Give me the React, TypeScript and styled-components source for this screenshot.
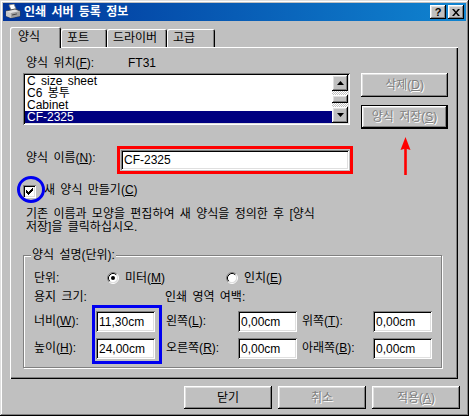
import React from 'react';
import styled, { createGlobalStyle, css } from 'styled-components';

const GlobalStyle = createGlobalStyle`
  html, body {
    margin: 0;
    padding: 0;
    background: #c0c0c0;
  }
  body {
    font-family: "Liberation Sans", "Noto Sans CJK KR", sans-serif;
    font-size: 12px;
    word-spacing: 2px;
    color: #000;
  }
  * { box-sizing: border-box; }
`;

// classic 3D edges
const raised = css`
  box-shadow: inset -1px -1px #000, inset 1px 1px #fff, inset -2px -2px #808080, inset 2px 2px #dfdfdf;
`;
const sunken = css`
  box-shadow: inset 1px 1px #808080, inset -1px -1px #fff, inset 2px 2px #000, inset -2px -2px #dfdfdf;
`;

const Window = styled.div`
  width: 469px;
  height: 416px;
  padding: 3px;
  background: #c0c0c0;
  box-shadow: inset -1px -1px #000, inset 1px 1px #dfdfdf, inset -2px -2px #808080, inset 2px 2px #fff;
  display: flex;
  flex-direction: column;
`;

const TitleBar = styled.div`
  height: 18px;
  display: flex;
  align-items: center;
  padding: 0 2px;
  background: linear-gradient(90deg, #00349a 0%, #1084d0 100%);
  color: #fff;
`;

const TitleText = styled.span`
  flex: 1;
  margin-left: 3px;
  font-weight: bold;
  line-height: 14px;
  white-space: nowrap;
`;

const CaptionButton = styled.div<{ $gap?: boolean }>`
  width: 16px;
  height: 14px;
  margin-left: ${({ $gap }) => ($gap ? 2 : 0)}px;
  background: #c0c0c0;
  ${raised}
  display: flex;
  align-items: center;
  justify-content: center;
  color: #000;
  font: bold 11px "Liberation Sans", sans-serif;
  line-height: 12px;
`;

const Body = styled.div`
  padding: 6px 0 0 7px;
`;

const TabStrip = styled.div`
  height: 20px;
  display: flex;
  align-items: flex-start;
`;

const Tab = styled.div<{ $active?: boolean; $w: number }>`
  position: relative;
  z-index: ${({ $active }) => ($active ? 1 : 0)};
  width: ${({ $w }) => $w}px;
  height: ${({ $active }) => ($active ? 21 : 18)}px;
  margin-top: ${({ $active }) => ($active ? 0 : 2)}px;
  padding: ${({ $active }) => ($active ? '3px 0 0 8px' : '2px 0 0 6px')};
  line-height: 14px;
  background: #c0c0c0;
  border-radius: 2px 2px 0 0;
  box-shadow: inset 1px 1px #fff, inset -1px 0 #000, inset -2px 0 #808080;
  white-space: nowrap;
`;

const Panel = styled.div`
  position: relative;
  width: 448px;
  height: 332px;
  padding: 9px 0 0 13px;
  box-shadow: inset 1px 1px #fff, inset -1px -1px #000, inset -2px -2px #808080;
  display: flex;
  flex-direction: column;
`;

const Row = styled.div<{ $mt: number; $h?: number }>`
  display: flex;
  align-items: flex-start;
  margin-top: ${({ $mt }) => $mt}px;
  ${({ $h }) => $h && `height: ${$h}px;`}
  line-height: 14px;
  white-space: nowrap;
`;

const Label = styled.span<{ $w?: number; $pl?: number; $mt?: number }>`
  display: inline-block;
  ${({ $w }) => $w && `width: ${$w}px;`}
  padding-left: ${({ $pl }) => $pl ?? 0}px;
  margin-top: ${({ $mt }) => $mt ?? 0}px;
  line-height: 14px;
  white-space: nowrap;
`;

const ListBox = styled.div`
  width: 327px;
  height: 52px;
  padding: 2px;
  background: #fff;
  ${sunken}
  display: flex;
`;

const ListItems = styled.div`
  flex: 1;
  display: flex;
  flex-direction: column;
`;

const ListItem = styled.div<{ $selected?: boolean }>`
  height: 12px;
  line-height: 12px;
  padding-left: 2px;
  white-space: nowrap;
  background: ${({ $selected }) => ($selected ? '#000080' : 'transparent')};
  color: ${({ $selected }) => ($selected ? '#fff' : '#000')};
`;

const ScrollBar = styled.div`
  width: 16px;
  display: flex;
  flex-direction: column;
`;

const ScrollArrow = styled.div`
  width: 16px;
  height: 16px;
  background: #c0c0c0;
  ${raised}
  display: flex;
  align-items: center;
  justify-content: center;
`;

const ScrollTrack = styled.div`
  height: 16px;
  padding-top: 4px;
  background: repeating-conic-gradient(#fff 0 25%, #c0c0c0 0 50%) 0 0 / 2px 2px;
`;

const ScrollThumb = styled.div`
  height: 8px;
  background: #c0c0c0;
  ${raised}
`;

const SideButtons = styled.div`
  margin-left: 11px;
  display: flex;
  flex-direction: column;
  gap: 8px;
`;

const Button = styled.div<{ $w: number; $h: number; $default?: boolean; $disabled?: boolean }>`
  width: ${({ $w }) => $w}px;
  height: ${({ $h }) => $h}px;
  background: #c0c0c0;
  display: flex;
  align-items: center;
  justify-content: center;
  line-height: 14px;
  white-space: nowrap;
  ${raised}
  ${({ $default }) =>
    $default &&
    css`
      box-shadow: inset 0 0 0 1px #000, inset -2px -2px #000, inset 2px 2px #fff, inset -3px -3px #808080, inset 3px 3px #dfdfdf;
    `}
  ${({ $disabled }) =>
    $disabled &&
    css`
      color: #808080;
      text-shadow: 1px 1px 0 #fff;
    `}
`;

const RedFrame = styled.div`
  width: 236px;
  height: 28px;
  border: 3px solid #ff0000;
  padding: 1px;
`;

const TextField = styled.div<{ $w?: number }>`
  width: ${({ $w }) => ($w ? `${$w}px` : '100%')};
  height: ${({ $w }) => ($w ? '21px' : '100%')};
  padding-left: 3px;
  background: #fff;
  ${sunken}
  display: flex;
  align-items: center;
  line-height: 14px;
  white-space: nowrap;
`;

const CheckBox = styled.div`
  width: 13px;
  height: 13px;
  margin-top: 2px;
  background: #fff;
  ${sunken}
  display: flex;
  align-items: center;
  justify-content: center;
`;

const Description = styled.div`
  margin-top: 9px;
  padding-left: 3px;
  line-height: 13px;
  white-space: nowrap;
`;

const GroupBox = styled.div`
  position: relative;
  margin-top: 21px;
  width: 419px;
  height: 113px;
  border: 1px solid #808080;
  box-shadow: inset 1px 1px #fff, 1px 1px #fff;
  padding: 15px 0 0 10px;
  display: flex;
  flex-direction: column;
`;

const Legend = styled.span`
  position: absolute;
  top: -7px;
  left: 7px;
  padding: 0 1px;
  background: #c0c0c0;
  line-height: 13px;
  white-space: nowrap;
`;

const RadioOption = styled.div<{ $w?: number }>`
  display: flex;
  align-items: center;
  ${({ $w }) => $w && `width: ${$w}px;`}
  height: 14px;
  gap: 6px;
`;

const Fields = styled.div`
  margin-top: 1px;
  display: flex;
  align-items: flex-start;
`;

const FieldColumn = styled.div<{ $w: number; $ml?: number }>`
  width: ${({ $w }) => $w}px;
  margin-left: ${({ $ml }) => $ml ?? 0}px;
  padding-top: 6px;
  display: flex;
  flex-direction: column;
  gap: 6px;
`;

const FieldLabel = styled.div`
  height: 21px;
  line-height: 21px;
  white-space: nowrap;
`;

const BlueFrame = styled.div`
  width: 70px;
  height: 59px;
  border: 3px solid #0000f0;
  padding: 3px 4px 2px 1px;
  display: flex;
  flex-direction: column;
  gap: 6px;
`;

const BlueCircle = styled.div`
  position: absolute;
  left: 7px;
  top: 129px;
  width: 28px;
  height: 27px;
  border: 3px solid #0000f0;
  border-radius: 50%;
`;

const ArrowMark = styled.svg`
  position: absolute;
  left: 390px;
  top: 90px;
`;

const Footer = styled.div`
  margin-top: 7px;
  padding-right: 6px;
  display: flex;
  justify-content: flex-end;
  gap: 6px;
`;

const CHECK = ['......X', '.....XX', 'X...XXX', 'XX.XXX.', 'XXXXX..', '.XXX...', '..X....'];
const checkPath = CHECK.flatMap((row, y) =>
  row.split('').map((c, x) => (c === 'X' ? `M${x} ${y}h1v1h-1z` : ''))
).join('');

const PrinterIcon = () => (
  <svg width="16" height="16" viewBox="0 0 16 16">
    <path d="M4 1 L9 0 L11 5 L6 6 Z" fill="#fff" stroke="#808080" strokeWidth="0.8" />
    <path d="M1 7 L10 5 L15 7 L15 12 L6 14 L1 12 Z" fill="#dfdfdf" stroke="#404040" strokeWidth="0.8" />
    <path d="M6 9 L15 7 L15 12 L6 14 Z" fill="#a0a0a0" />
    <path d="M1 7 L6 9 L6 14 L1 12 Z" fill="#c8c8c8" />
    <rect x="7" y="10" width="5" height="1" fill="#404040" transform="rotate(-12 9 10)" />
  </svg>
);

const ArrowUp = () => (
  <svg width="7" height="4" viewBox="0 0 7 4">
    <polygon points="3.5,0 7,4 0,4" fill="#000" />
  </svg>
);

const ArrowDown = () => (
  <svg width="7" height="4" viewBox="0 0 7 4">
    <polygon points="0,0 7,0 3.5,4" fill="#000" />
  </svg>
);

const Radio = ({ checked }: { checked?: boolean }) => (
  <svg width="12" height="12" viewBox="0 0 12 12">
    <circle cx="6" cy="6" r="4.5" fill="#fff" />
    <path d="M2.11 9.89 A5.5 5.5 0 0 1 9.89 2.11" fill="none" stroke="#808080" />
    <path d="M9.89 2.11 A5.5 5.5 0 0 1 2.11 9.89" fill="none" stroke="#fff" />
    <path d="M2.82 9.18 A4.5 4.5 0 0 1 9.18 2.82" fill="none" stroke="#000" />
    <path d="M9.18 2.82 A4.5 4.5 0 0 1 2.82 9.18" fill="none" stroke="#dfdfdf" />
    {checked && <circle cx="6" cy="6" r="2" fill="#000" />}
  </svg>
);

const listItems = ['C size sheet', 'C6 봉투', 'Cabinet', 'CF-2325'];

export default function App() {
  return (
    <>
      <GlobalStyle />
      <Window>
        <TitleBar>
          <PrinterIcon />
          <TitleText>인쇄 서버 등록 정보</TitleText>
          <CaptionButton>?</CaptionButton>
          <CaptionButton $gap>
            <svg width="8" height="7" viewBox="0 0 8 7">
              <path d="M0 0h2l2 2.5L6 0h2L5 3.5L8 7H6L4 4.5L2 7H0l3-3.5z" fill="#000" />
            </svg>
          </CaptionButton>
        </TitleBar>

        <Body>
          <TabStrip>
            <Tab $active $w={51}>양식</Tab>
            <Tab $w={46}>포트</Tab>
            <Tab $w={60}>드라이버</Tab>
            <Tab $w={48}>고급</Tab>
          </TabStrip>

          <Panel>
            <Row $mt={0} $h={14}>
              <Label $w={105} $pl={3}>양식 위치(<u>F</u>):</Label>
              <Label>FT31</Label>
            </Row>

            <Row $mt={3}>
              <ListBox>
                <ListItems>
                  {listItems.map((item, i) => (
                    <ListItem key={item} $selected={i === listItems.length - 1}>{item}</ListItem>
                  ))}
                </ListItems>
                <ScrollBar>
                  <ScrollArrow><ArrowUp /></ScrollArrow>
                  <ScrollTrack><ScrollThumb /></ScrollTrack>
                  <ScrollArrow><ArrowDown /></ScrollArrow>
                </ScrollBar>
              </ListBox>
              <SideButtons>
                <Button $w={87} $h={24} $disabled>삭제(<u>D</u>)</Button>
                <Button $w={87} $h={24} $disabled $default>양식 저장(<u>S</u>)</Button>
              </SideButtons>
            </Row>

            <Row $mt={17}>
              <Label $w={94} $pl={3} $mt={5}>양식 이름(<u>N</u>):</Label>
              <RedFrame>
                <TextField>CF-2325</TextField>
              </RedFrame>
            </Row>

            <Row $mt={9} $h={16}>
              <CheckBox>
                <svg width="7" height="7" viewBox="0 0 7 7">
                  <path d={checkPath} fill="#000" />
                </svg>
              </CheckBox>
              <Label $pl={8}>새 양식 만들기(<u>C</u>)</Label>
            </Row>

            <Description>
              기존 이름과 모양을 편집하여 새 양식을 정의한 후 [양식
              <br />
              저장]을 클릭하십시오.
            </Description>

            <GroupBox>
              <Legend>양식 설명(단위):</Legend>
              <Row $mt={0} $h={14}>
                <Label $w={73}>단위:</Label>
                <RadioOption $w={119}>
                  <Radio checked />
                  <span>미터(<u>M</u>)</span>
                </RadioOption>
                <RadioOption>
                  <Radio />
                  <span>인치(<u>E</u>)</span>
                </RadioOption>
              </Row>
              <Row $mt={5} $h={14}>
                <Label $w={131}>용지 크기:</Label>
                <Label>인쇄 영역 여백:</Label>
              </Row>
              <Fields>
                <FieldColumn $w={58}>
                  <FieldLabel>너비(<u>W</u>):</FieldLabel>
                  <FieldLabel>높이(<u>H</u>):</FieldLabel>
                </FieldColumn>
                <BlueFrame>
                  <TextField $w={59}>11,30cm</TextField>
                  <TextField $w={59}>24,00cm</TextField>
                </BlueFrame>
                <FieldColumn $w={72} $ml={4}>
                  <FieldLabel>왼쪽(<u>L</u>):</FieldLabel>
                  <FieldLabel>오른쪽(<u>R</u>):</FieldLabel>
                </FieldColumn>
                <FieldColumn $w={59}>
                  <TextField $w={59}>0,00cm</TextField>
                  <TextField $w={59}>0,00cm</TextField>
                </FieldColumn>
                <FieldColumn $w={71} $ml={5}>
                  <FieldLabel>위쪽(<u>T</u>):</FieldLabel>
                  <FieldLabel>아래쪽(<u>B</u>):</FieldLabel>
                </FieldColumn>
                <FieldColumn $w={59}>
                  <TextField $w={59}>0,00cm</TextField>
                  <TextField $w={59}>0,00cm</TextField>
                </FieldColumn>
              </Fields>
            </GroupBox>

            <BlueCircle />
            <ArrowMark width="11" height="38" viewBox="0 0 11 38">
              <polygon points="5.5,0 10.5,13 5.5,11.5 0.5,13" fill="#ff0000" />
              <rect x="4.2" y="11" width="2.6" height="27" fill="#ff0000" />
            </ArrowMark>
          </Panel>

          <Footer>
            <Button $w={88} $h={23}>닫기</Button>
            <Button $w={88} $h={23} $disabled>취소</Button>
            <Button $w={88} $h={23} $disabled>적용(<u>A</u>)</Button>
          </Footer>
        </Body>
      </Window>
    </>
  );
}
